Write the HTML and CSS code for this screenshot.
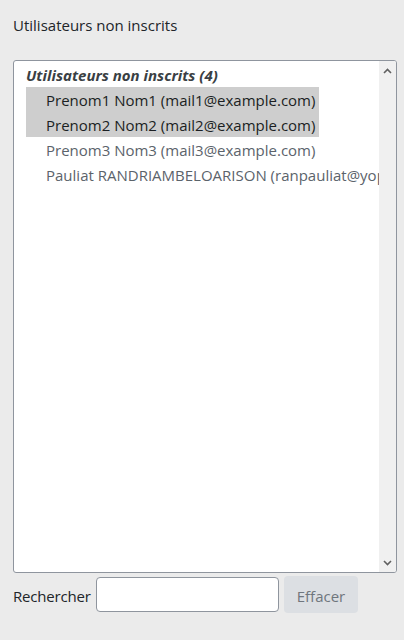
FILE: index.html
```html
<!DOCTYPE html>
<html lang="fr">
<head>
<meta charset="utf-8">
<link rel="stylesheet" href="styles.css">
</head>
<body>
<div class="page">
  <div class="title">Utilisateurs non inscrits</div>
  <div class="listbox">
    <div class="list">
      <div class="group">Utilisateurs non inscrits (4)</div>
      <div class="opt selected">Prenom1 Nom1 (mail1@example.com)</div>
      <div class="opt selected">Prenom2 Nom2 (mail2@example.com)</div>
      <div class="opt">Prenom3 Nom3 (mail3@example.com)</div>
      <div class="opt">Pauliat RANDRIAMBELOARISON (ranpauliat@yopmail.com)</div>
    </div>
    <div class="scrollbar">
      <svg class="arrow" width="9" height="6" viewBox="0 0 9 6"><path d="M1 5 L4.5 1.5 L8 5" fill="none" stroke="#606060" stroke-width="1.6"/></svg>
      <svg class="arrow" width="9" height="6" viewBox="0 0 9 6"><path d="M1 1 L4.5 4.5 L8 1" fill="none" stroke="#606060" stroke-width="1.6"/></svg>
    </div>
  </div>
  <div class="search">
    <label class="search-label">Rechercher</label>
    <input class="search-input" type="text">
    <button class="clear-btn" disabled>Effacer</button>
  </div>
</div>
</body>
</html>
```
FILE: styles.css
```css
html, body {
  margin: 0;
  padding: 0;
  background: #ebebeb;
}
body {
  font-family: "Open Sans", "Noto Sans", sans-serif;
  font-size: 15px;
  color: #212529;
}
.page {
  padding: 13px 7px 0 13px;
}
.title {
  padding-top: 2px;
  line-height: 20px;
  height: 20px;
  margin-bottom: 25px;
}
.listbox {
  display: flex;
  height: 511px;
  border: 1px solid #8f959e;
  border-radius: 3px;
  background: #fff;
  overflow: hidden;
}
.list {
  flex: 1;
  min-width: 0;
  padding: 1px 0 0 12px;
  overflow: hidden;
  white-space: nowrap;
}
.group {
  padding-top: 2px;
  line-height: 23px;
  font-weight: bold;
  font-style: italic;
  color: #3a3f44;
}
.opt {
  width: fit-content;
  padding: 2px 4px 0 20px;
  line-height: 23px;
  color: #5b636b;
}
.opt.selected {
  background: #cecece;
  color: #1b1f23;
}
.scrollbar {
  width: 17px;
  flex: none;
  background: #f0f0f0;
  display: flex;
  flex-direction: column;
  justify-content: space-between;
  align-items: center;
  padding: 7px 0 6px;
  box-sizing: border-box;
}
.arrow {
  display: block;
}
.search {
  display: flex;
  align-items: center;
  gap: 5px;
  margin-top: 3px;
}
.search-label {
  width: 78px;
  white-space: nowrap;
  padding-top: 2px;
  line-height: 22px;
  letter-spacing: -0.2px;
}
.search-input {
  width: 183px;
  height: 35px;
  box-sizing: border-box;
  border: 1px solid #8f959e;
  border-radius: 4px;
  background: #fff;
  margin: 0;
  padding: 0 8px;
  font: inherit;
}
.clear-btn {
  width: 74px;
  height: 37px;
  border: none;
  border-radius: 4px;
  background: #dcdfe3;
  color: #6f767d;
  font: inherit;
  padding: 2px 0 0;
  margin: 0;
}
```
